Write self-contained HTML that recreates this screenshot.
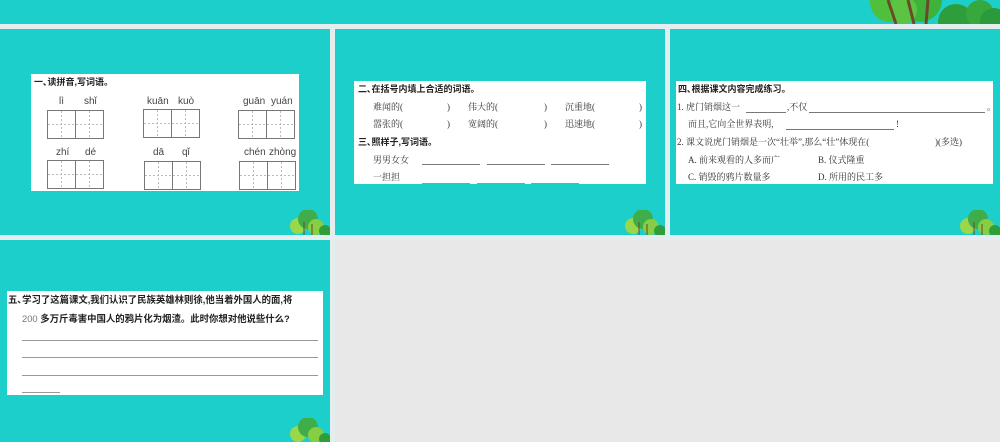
<!DOCTYPE html>
<html><head><meta charset="utf-8"><style>
*{margin:0;padding:0;box-sizing:border-box}
body{width:1000px;height:442px;overflow:hidden;background:#e4eeee;position:relative;font-family:"Liberation Sans","Noto Sans CJK SC",sans-serif;color:#222}
.p{position:absolute;background:#1ccfca}
.w{position:absolute;background:#fff}
.t{position:absolute;font-size:9px;white-space:nowrap;line-height:11px}
.s{font-family:"Liberation Serif","Noto Serif CJK SC","Noto Sans CJK SC",serif;color:#333}
.b{font-weight:bold}
.g{position:absolute;width:57px;height:29px;border:1px solid #777;background:
linear-gradient(#777,#777) 27px 0/1px 100% no-repeat,
repeating-linear-gradient(90deg,#bbb 0 2px,transparent 2px 4px) 0 13px/100% 1px no-repeat,
repeating-linear-gradient(#bbb 0 2px,transparent 2px 4px) 13px 0/1px 100% no-repeat,
repeating-linear-gradient(#bbb 0 2px,transparent 2px 4px) 41px 0/1px 100% no-repeat}
.py{position:absolute;font-size:10px;color:#444;white-space:nowrap}
.l{position:absolute;height:1px;background:#777}
</style></head><body>
<div class="p" style="left:0;top:0;width:1000px;height:24px"></div>
<svg style="position:absolute;left:868px;top:0" width="132" height="24">
<circle cx="22" cy="2" r="20" fill="#4fbf3c"/><circle cx="52" cy="0" r="22" fill="#3fb23a"/><circle cx="35" cy="10" r="14" fill="#5cc443"/><circle cx="88" cy="22" r="18" fill="#2e9e3d"/><circle cx="112" cy="14" r="14" fill="#36a83e"/><circle cx="126" cy="22" r="14" fill="#2a9a3a"/>
<path d="M20 0 L28 24 M40 0 L46 24 M60 0 L58 24" stroke="#6b4a2a" stroke-width="3"/></svg>
<div class="p" style="left:0;top:29px;width:330px;height:206px"></div>
<div class="p" style="left:335px;top:29px;width:330px;height:206px"></div>
<div class="p" style="left:670px;top:29px;width:330px;height:206px"></div>
<div class="p" style="left:0;top:240px;width:330px;height:202px"></div>
<div style="position:absolute;left:335px;top:240px;width:665px;height:202px;background:#e8e8e8"></div>
<svg style="position:absolute;left:286px;top:210px" width="44" height="25"><circle cx="12" cy="16" r="8" fill="#9ad84a"/><circle cx="22" cy="9" r="10" fill="#3fae4a"/><circle cx="30" cy="17" r="8" fill="#86cf44"/><circle cx="39" cy="21" r="6" fill="#2e9e3d"/><path d="M18 25V12M26 25V14" stroke="#6b4a2a"/></svg>
<svg style="position:absolute;left:621px;top:210px" width="44" height="25"><circle cx="12" cy="16" r="8" fill="#9ad84a"/><circle cx="22" cy="9" r="10" fill="#3fae4a"/><circle cx="30" cy="17" r="8" fill="#86cf44"/><circle cx="39" cy="21" r="6" fill="#2e9e3d"/><path d="M18 25V12M26 25V14" stroke="#6b4a2a"/></svg>
<svg style="position:absolute;left:956px;top:210px" width="44" height="25"><circle cx="12" cy="16" r="8" fill="#9ad84a"/><circle cx="22" cy="9" r="10" fill="#3fae4a"/><circle cx="30" cy="17" r="8" fill="#86cf44"/><circle cx="39" cy="21" r="6" fill="#2e9e3d"/><path d="M18 25V12M26 25V14" stroke="#6b4a2a"/></svg>
<svg style="position:absolute;left:286px;top:418px" width="44" height="24"><circle cx="12" cy="16" r="8" fill="#9ad84a"/><circle cx="22" cy="9" r="10" fill="#3fae4a"/><circle cx="30" cy="17" r="8" fill="#86cf44"/><circle cx="39" cy="21" r="6" fill="#2e9e3d"/></svg>

<!-- panel1 -->
<div class="w" style="left:31px;top:74px;width:268px;height:117px"></div>
<div class="t b" style="left:34px;top:77px">一､读拼音,写词语。</div>
<div class="py" style="left:59px;top:96px">lì</div><div class="py" style="left:84px;top:96px">shǐ</div>
<div class="py" style="left:147px;top:96px">kuān</div><div class="py" style="left:178px;top:96px">kuò</div>
<div class="py" style="left:243px;top:96px">guān</div><div class="py" style="left:271px;top:96px">yuán</div>
<div class="g" style="left:47px;top:110px"></div><div class="g" style="left:143px;top:109px"></div><div class="g" style="left:238px;top:110px"></div>
<div class="py" style="left:56px;top:147px">zhí</div><div class="py" style="left:85px;top:147px">dé</div>
<div class="py" style="left:153px;top:147px">dā</div><div class="py" style="left:182px;top:147px">qǐ</div>
<div class="py" style="left:244px;top:147px">chén</div><div class="py" style="left:269px;top:147px">zhòng</div>
<div class="g" style="left:47px;top:160px"></div><div class="g" style="left:144px;top:161px"></div><div class="g" style="left:239px;top:161px"></div>

<!-- panel2 -->
<div class="w" style="left:354px;top:81px;width:292px;height:103px"></div>
<div class="t b" style="left:358px;top:84px">二､在括号内填上合适的词语。</div>
<div class="t s" style="left:373px;top:102px">难闻的(</div><div class="t s" style="left:447px;top:102px">)</div>
<div class="t s" style="left:468px;top:102px">伟大的(</div><div class="t s" style="left:544px;top:102px">)</div>
<div class="t s" style="left:565px;top:102px">沉重地(</div><div class="t s" style="left:639px;top:102px">)</div>
<div class="t s" style="left:373px;top:119px">嚣张的(</div><div class="t s" style="left:447px;top:119px">)</div>
<div class="t s" style="left:468px;top:119px">宽阔的(</div><div class="t s" style="left:544px;top:119px">)</div>
<div class="t s" style="left:565px;top:119px">迅速地(</div><div class="t s" style="left:639px;top:119px">)</div>
<div class="t b" style="left:358px;top:137px">三､照样子,写词语。</div>
<div class="t s" style="left:373px;top:155px">男男女女</div>
<div class="l" style="left:422px;top:164px;width:58px"></div><div class="l" style="left:487px;top:164px;width:58px"></div><div class="l" style="left:551px;top:164px;width:58px"></div>
<div class="t s" style="left:373px;top:172px">一担担</div>
<div class="l" style="left:422px;top:183px;width:48px;background:#999"></div><div class="l" style="left:477px;top:183px;width:48px;background:#999"></div><div class="l" style="left:531px;top:183px;width:48px;background:#999"></div>

<!-- panel3 -->
<div class="w" style="left:676px;top:81px;width:317px;height:103px"></div>
<div class="t b" style="left:678px;top:84px">四､根据课文内容完成练习。</div>
<div class="t s" style="left:677px;top:102px">1. 虎门销烟这一</div><div class="l" style="left:746px;top:112px;width:40px"></div>
<div class="t s" style="left:787px;top:102px">,不仅</div><div class="l" style="left:809px;top:112px;width:176px"></div><div class="t s" style="left:987px;top:102px">。</div>
<div class="t s" style="left:688px;top:119px">而且,它向全世界表明,</div><div class="l" style="left:786px;top:129px;width:108px"></div><div class="t s" style="left:896px;top:119px">!</div>
<div class="t s" style="left:677px;top:137px">2. 课文说虎门销烟是一次“壮举”,那么“壮”体现在(</div><div class="t s" style="left:935px;top:137px">)(多选)</div>
<div class="t s" style="left:688px;top:155px">A. 前来观看的人多而广</div><div class="t s" style="left:818px;top:155px">B. 仪式隆重</div>
<div class="t s" style="left:688px;top:172px">C. 销毁的鸦片数量多</div><div class="t s" style="left:818px;top:172px">D. 所用的民工多</div>

<!-- panel4 -->
<div class="w" style="left:7px;top:291px;width:316px;height:104px"></div>
<div class="t b" style="left:8px;top:294px;font-size:9.4px">五､学习了这篇课文,我们认识了民族英雄林则徐,他当着外国人的面,将</div>
<div class="t b" style="left:22px;top:313px;font-size:9.4px"><span style="font-weight:normal;color:#777">200</span> 多万斤毒害中国人的鸦片化为烟渣。此时你想对他说些什么?</div>
<div class="l" style="left:22px;top:340px;width:296px;background:#999"></div>
<div class="l" style="left:22px;top:357px;width:296px;background:#999"></div>
<div class="l" style="left:22px;top:375px;width:296px;background:#999"></div>
<div class="l" style="left:22px;top:392px;width:38px;background:#999"></div>
</body></html>
